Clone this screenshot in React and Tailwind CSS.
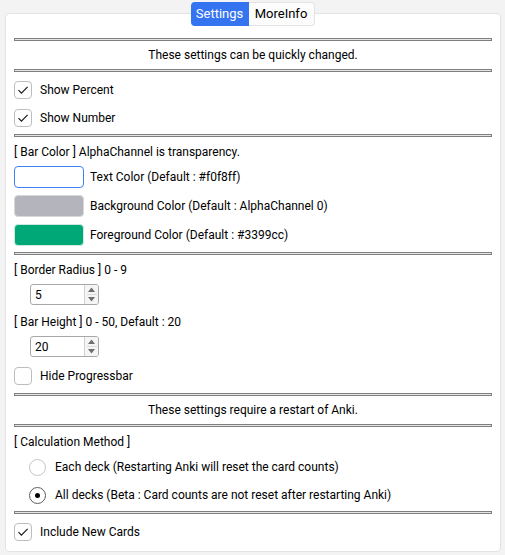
import React from "react";

const font = { fontFamily: 'Roboto, "Noto Sans", "Liberation Sans", sans-serif' };

function Sep({ className = "" }) {
  return <div className={"h-[3px] border border-[#7f7f7f] bg-[#e6e6e6] " + className} />;
}

function Check({ checked }) {
  return (
    <div className="w-[18px] h-[18px] rounded-[4px] border border-[#bdbdbd] bg-white flex items-center justify-center shrink-0">
      {checked && (
        <svg width="12" height="12" viewBox="0 0 12 12">
          <path d="M1.5 6.2 L4.4 9.1 L10.6 2.8" fill="none" stroke="#1a1a1a" strokeWidth="1.2" />
        </svg>
      )}
    </div>
  );
}

function CheckRow({ checked, label, className = "" }) {
  return (
    <div className={"h-[28px] flex items-center gap-[8px] " + className}>
      <Check checked={checked} />
      <span>{label}</span>
    </div>
  );
}

function ColorRow({ btn, label, className = "" }) {
  return (
    <div className={"flex items-center gap-[6px] " + className}>
      <div className={"w-[70px] h-[22px] rounded-[4px] " + btn} />
      <span>{label}</span>
    </div>
  );
}

function Spin({ value, className = "" }) {
  return (
    <div className={"ml-[16px] w-[69px] h-[21px] flex border border-[#a8a8a8] rounded-[3px] bg-white overflow-hidden " + className}>
      <div className="flex-1 flex items-center pl-[4px]">{value}</div>
      <div className="w-[14px] border-l border-[#d0d0d0] bg-[#f5f5f5] flex flex-col items-center justify-center gap-[2px]">
        <svg width="7" height="5" viewBox="0 0 7 5"><path d="M0 5 L3.5 0.5 L7 5 Z" fill="#6e6e6e" /></svg>
        <div className="w-[10px] h-px bg-[#dadada]" />
        <svg width="7" height="5" viewBox="0 0 7 5"><path d="M0 0 L3.5 4.5 L7 0 Z" fill="#6e6e6e" /></svg>
      </div>
    </div>
  );
}

function Radio({ checked, label, className = "" }) {
  return (
    <div className={"h-[28px] flex items-center gap-[9px] ml-[15px] " + className}>
      {checked ? (
        <div className="w-[17px] h-[17px] rounded-full border-[1.5px] border-[#5c5c5c] bg-white flex items-center justify-center shrink-0">
          <div className="w-[5px] h-[5px] rounded-full bg-black" />
        </div>
      ) : (
        <div className="w-[17px] h-[17px] rounded-full border border-[#c4c4c4] bg-white shrink-0" />
      )}
      <span>{label}</span>
    </div>
  );
}

export default function App() {
  return (
    <div className="w-[505px] h-[555px] bg-[#f3f3f3] text-[12px] text-black pt-[2px] flex flex-col" style={font}>
      <div className="relative z-10 flex justify-center">
        <div className="flex h-[24px]">
          <div className="w-[58px] rounded-l-[4px] bg-[#3574f0] text-white flex items-center justify-center text-[13px]">Settings</div>
          <div className="w-[66px] rounded-r-[4px] bg-[#fcfcfc] border border-l-0 border-[#e3e3e3] flex items-center justify-center text-[13px]">MoreInfo</div>
        </div>
      </div>
      <div className="-mt-[13px] ml-[5px] w-[496px] h-[539px] bg-white border border-[#e3e3e3] rounded-[4px] px-[8px] pt-[24px] flex flex-col">
        <Sep />
        <div className="h-[28px] flex items-center justify-center">These settings can be quickly changed.</div>
        <Sep />
        <CheckRow checked label="Show Percent" className="mt-[4px]" />
        <CheckRow checked label="Show Number" />
        <Sep className="mt-[2px]" />
        <div className="h-[20px] mt-[5px] flex items-center">[ Bar Color ] AlphaChannel is transparency.</div>
        <ColorRow btn="bg-white border border-[#3b82f6]" label="Text Color (Default : #f0f8ff)" className="mt-[4px]" />
        <ColorRow btn="bg-[#b4b4bc] border border-[#d8d8dc]" label="Background Color (Default : AlphaChannel 0)" className="mt-[7px]" />
        <ColorRow btn="bg-[#00a878] border border-[#d0e8e0]" label="Foreground Color (Default : #3399cc)" className="mt-[7px]" />
        <Sep className="mt-[6px]" />
        <div className="h-[20px] mt-[5px] flex items-center">[ Border Radius ] 0 - 9</div>
        <Spin value="5" className="mt-[4px]" />
        <div className="h-[20px] mt-[7px] flex items-center">[ Bar Height ] 0 - 50, Default : 20</div>
        <Spin value="20" className="mt-[4px]" />
        <CheckRow label="Hide Progressbar" className="mt-[5px]" />
        <Sep className="mt-[3px]" />
        <div className="h-[28px] flex items-center justify-center">These settings require a restart of Anki.</div>
        <Sep />
        <div className="h-[20px] mt-[5px] flex items-center">[ Calculation Method ]</div>
        <Radio label="Each deck (Restarting Anki will reset the card counts)" className="mt-[1px]" />
        <Radio checked label="All decks (Beta : Card counts are not reset after restarting Anki)" />
        <Sep className="mt-[2px]" />
        <CheckRow checked label="Include New Cards" className="mt-[4px]" />
      </div>
    </div>
  );
}
